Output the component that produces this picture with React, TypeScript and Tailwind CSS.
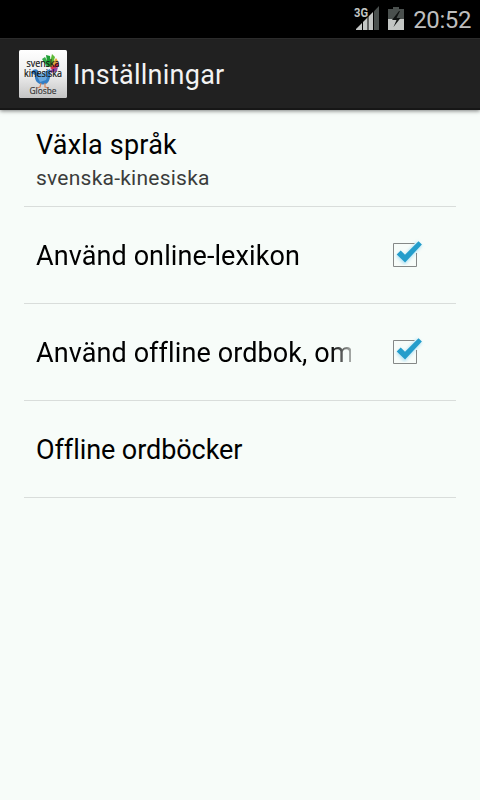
const StatusBar = () => (
  <header className="flex h-[38px] shrink-0 items-center justify-end bg-black pr-[9px] text-[#bebebe]">
    <svg width="26" height="24" viewBox="0 0 26 24" className="mr-2 mt-[-2px] overflow-visible" aria-hidden="true">
      <path d="M20 5v19H2v-1z" fill="#c3c6c4" />
      <path d="M20 5.200 25 0v24h-5z" fill="#4a504e" />
      <path d="M8.500 14v10M14 9v15M19.500 4v20" stroke="#000" strokeWidth="1" />
      <text x="0" y="10.500" fill="#c3c6c4" stroke="#000" strokeWidth="1" paintOrder="stroke" fontFamily="Roboto, sans-serif" fontWeight="700" fontSize="13" textLength="14" lengthAdjust="spacingAndGlyphs">3G</text>
    </svg>
    <svg width="16" height="23" viewBox="0 0 16 23" className="mr-[9px] mt-[-2px]" aria-hidden="true">
      <path d="M5 0h6v2h5v10H0V2h5z" fill="#4a504e" />
      <path d="M0 12h16v11H0z" fill="#c3c6c4" />
      <path d="M11 4 4 13h4.500L5.500 20l7-9H8.500l3.500-7z" fill="#101312" />
    </svg>
    <span className="mt-0.5 text-[24px] leading-7 tracking-[-0.4px]">20:52</span>
  </header>
);

const AppIcon = () => (
  <svg width="48" height="48" viewBox="0 0 48 48" aria-hidden="true">
    <defs>
      <linearGradient id="tile" x1="0" y1="0" x2="0" y2="1">
        <stop offset="0" stopColor="#fff" />
        <stop offset="0.5" stopColor="#eee" />
        <stop offset="1" stopColor="#c4c4c4" />
      </linearGradient>
    </defs>
    <rect width="48" height="48" rx="1.500" fill="url(#tile)" />
    <path d="m28 17-5-8 3-2 5 9z" fill="#35ac4a" />
    <path d="m29 17-2-12 4 1 1 10z" fill="#1e9e35" />
    <path d="m30 17 3-13 3 3-3 10z" fill="#5cba36" />
    <path d="m31 17 6-9 2 3-5 7z" fill="#e3a53b" />
    <path d="m31 18 8-6 1 4-6 4z" fill="#dc3550" />
    <path d="m31 20 8-3-1 4-6 2z" fill="#9448a5" />
    <path d="M14 20c3-2 6 0 6 4 4 1 6-3 11-5 1 6 0 13-4 15-7 2-12-3-11-9l-4-2z" fill="#347ec4" />
    <path d="m18 26 12-5-3 9-6 2z" fill="#69a7dd" />
    <path d="m22 33-1 4-3 1m8-5v4l4 1" fill="none" stroke="#d4855c" strokeWidth="1.200" />
    <g fill="#111" fontFamily="Open Sans, sans-serif" textAnchor="middle">
      <text x="24" y="17" fontSize="10" textLength="33" lengthAdjust="spacingAndGlyphs" stroke="#111" strokeWidth="0.200">svenska</text>
      <text x="24" y="27" fontSize="10" textLength="38" lengthAdjust="spacingAndGlyphs" stroke="#111" strokeWidth="0.200">kinesiska</text>
      <text x="24" y="43.500" fontSize="9.500" fill="#333" stroke="#333" strokeWidth="0.150" textLength="27" lengthAdjust="spacingAndGlyphs">Glosbe</text>
    </g>
  </svg>
);

const Checkbox = () => (
  <svg width="48" height="48" viewBox="0 0 48 48" role="checkbox" aria-checked="true">
    <defs>
      <filter id="glow" x="-30%" y="-30%" width="160%" height="160%">
        <feGaussianBlur stdDeviation="1.800" />
      </filter>
    </defs>
    <path d="m17.500 22.500 6 6.500L38.500 12.500" fill="none" stroke="#9fdcf4" strokeOpacity="0.700" strokeWidth="7" filter="url(#glow)" />
    <path d="M33.500 12.500h-21v23h23V22" fill="none" stroke="#858887" />
    <path d="m15.700 23.500 4-4 4.300 4.300L37.500 10.300l3.400 3.200L24.100 31.500z" fill="#249dcb" />
  </svg>
);

type RowProps = {
  title: string;
  summary?: string;
  checked?: boolean;
};

const PreferenceRow = ({ title, summary, checked }: RowProps) => (
  <li className="flex h-[97px] items-center border-b border-[#d9dddb] pl-3 pr-[27px]">
    <div className={summary ? 'min-w-0 flex-1 pt-1' : 'min-w-0 flex-1 pt-0.5'}>
      <p
        className={
          checked
            ? 'w-[315px] whitespace-nowrap text-[27px] leading-8 tracking-[0.1px] text-black [mask-image:linear-gradient(to_right,black_295px,transparent_325px)]'
            : summary
              ? 'text-[27px] leading-8 tracking-[0.2px] text-black'
              : 'text-[27px] leading-8 tracking-[-0.07px] text-black'
        }
      >
        {title}
      </p>
      {summary && <p className="pt-1 text-[21px] leading-[26px] tracking-[0.24px] text-[#3b3d3c]">{summary}</p>}
    </div>
    {checked && <Checkbox />}
  </li>
);

const App = () => {
  return (
    <div className="flex h-[800px] w-[480px] flex-col overflow-hidden bg-[#f7fcf9] font-[Roboto,sans-serif] [font-variant-ligatures:none]">
      <StatusBar />
      <div className="flex h-[72px] shrink-0 items-center border-b-2 border-t border-b-[#161616] border-t-[#2b2b2b] bg-[#212121] pl-[19px] shadow-[0_1px_4px_rgba(0,0,0,0.5)]">
        <AppIcon />
        <h1 className="ml-1.5 pt-0.5 text-[27px] leading-8 tracking-[0.25px] text-[#f3f3f3]">Inställningar</h1>
      </div>
      <ul className="px-6">
        <PreferenceRow title="Växla språk" summary="svenska-kinesiska" />
        <PreferenceRow title="Använd online-lexikon" checked />
        <PreferenceRow title="Använd offline ordbok, om" checked />
        <PreferenceRow title="Offline ordböcker" />
      </ul>
    </div>
  );
};

export default App;
